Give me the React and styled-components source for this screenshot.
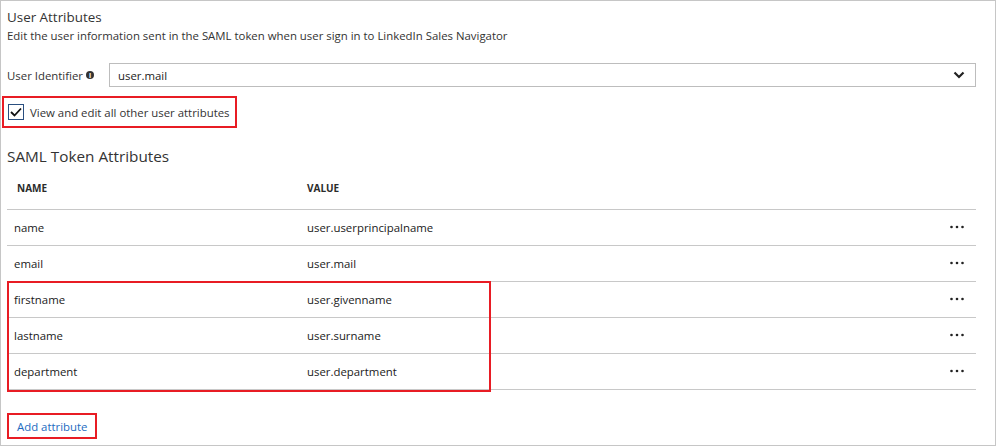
import React from 'react';
import styled, { createGlobalStyle } from 'styled-components';

const GlobalStyle = createGlobalStyle`
   html, body {
      margin: 0;
      padding: 0;
      background: #fff;
   }
   body {
      font-family: "Open Sans", "Noto Sans", sans-serif;
      color: #252525;
   }
`

const attributes = [
   { name: 'name', value: 'user.userprincipalname' },
   { name: 'email', value: 'user.mail' },
]

const extraAttributes = [
   { name: 'firstname', value: 'user.givenname' },
   { name: 'lastname', value: 'user.surname' },
   { name: 'department', value: 'user.department' },
]

const MoreIcon = () => (
   <svg width="14" height="4" viewBox="0 0 14 4">
      <circle cx="1.5" cy="2" r="1.3" fill="#222" />
      <circle cx="7" cy="2" r="1.3" fill="#222" />
      <circle cx="12.5" cy="2" r="1.3" fill="#222" />
   </svg>
)

const Row = ({ item }) => (
   <TableRow>
      <Cell>{item.name}</Cell>
      <Cell>{item.value}</Cell>
      <Actions><MoreIcon /></Actions>
   </TableRow>
)

const App = () => {
   return (
      <>
         <GlobalStyle />
         <Panel>
            <Title>User Attributes</Title>
            <Subtitle>Edit the user information sent in the SAML token when user sign in to LinkedIn Sales Navigator</Subtitle>

            <Field>
               <Label>
                  User Identifier
                  <Info>i</Info>
               </Label>
               <Select>
                  <span>user.mail</span>
                  <svg width="12" height="8" viewBox="0 0 12 8">
                     <polyline points="1.5,1.5 6,6 10.5,1.5" fill="none" stroke="#222" strokeWidth="2.2" />
                  </svg>
               </Select>
            </Field>

            <Highlight>
               <Checkbox>
                  <svg width="12" height="10" viewBox="0 0 12 10">
                     <polyline points="1,5 4.5,8.5 11,1.5" fill="none" stroke="#111" strokeWidth="1.8" />
                  </svg>
               </Checkbox>
               View and edit all other user attributes
            </Highlight>

            <Heading>SAML Token Attributes</Heading>

            <Table>
               <HeaderRow>
                  <HeadCell>Name</HeadCell>
                  <HeadCell>Value</HeadCell>
                  <span />
               </HeaderRow>
               {attributes.map((item) => (
                  <Row key={item.name} item={item} />
               ))}
               <Group>
                  {extraAttributes.map((item) => (
                     <Row key={item.name} item={item} />
                  ))}
               </Group>
            </Table>

            <AddLink href="#" onClick={(e) => e.preventDefault()}>Add attribute</AddLink>
         </Panel>
      </>
   )
}

const Panel = styled.div`
   box-sizing: border-box;
   width: 996px;
   height: 446px;
   border: 1px solid #c6c6c6;
   padding: 6px 19px 0 6px;
   overflow: hidden;
`

const Title = styled.h2`
   margin: 0;
   font-size: 13.4px;
   font-weight: 400;
   line-height: 20px;
   color: #333;
`

const Subtitle = styled.p`
   margin: 0;
   font-size: 11.4px;
   line-height: 18px;
   color: #333;
`

const Field = styled.div`
   display: grid;
   grid-template-columns: 102px 1fr;
   align-items: center;
   margin-top: 18px;
`

const Label = styled.label`
   display: flex;
   align-items: center;
   gap: 3px;
   font-size: 11.4px;
   color: #333;
`

const Info = styled.span`
   display: inline-flex;
   align-items: center;
   justify-content: center;
   width: 8px;
   height: 8px;
   border-radius: 50%;
   background: #333;
   color: #fff;
   font-size: 7px;
   font-weight: 700;
   line-height: 1;
`

const Select = styled.div`
   box-sizing: border-box;
   display: flex;
   align-items: center;
   justify-content: space-between;
   height: 24px;
   border: 1px solid #bdbdbd;
   padding: 0 10px 0 8px;
   font-size: 11.4px;
   color: #222;
`

const Highlight = styled.div`
   display: inline-flex;
   align-items: center;
   gap: 6px;
   box-sizing: border-box;
   height: 32px;
   margin: 9px 0 0 -5px;
   padding: 0 5px 0 4px;
   border: 2px solid #e81c24;
   font-size: 11.4px;
   color: #333;
`

const Checkbox = styled.span`
   box-sizing: border-box;
   display: inline-flex;
   align-items: center;
   justify-content: center;
   width: 16px;
   height: 16px;
   border: 1px solid #2a4f80;
`

const Heading = styled.h3`
   margin: 17px 0 0;
   font-size: 15.3px;
   font-weight: 400;
   line-height: 22px;
   color: #333;
`

const Table = styled.div`
   margin-top: 1px;
`

const columns = `
   display: grid;
   grid-template-columns: 300px 1fr 40px;
   align-items: center;
   border-bottom: 1px solid #c8c8c8;
`

const HeaderRow = styled.div`
   ${columns}
   height: 42px;
   padding-bottom: 2px;
   box-sizing: border-box;
`

const HeadCell = styled.span`
   font-size: 10px;
   font-weight: 700;
   text-transform: uppercase;
   color: #2b2b2b;
   padding-left: 10px;
   & + & {
      padding-left: 0;
   }
`

const TableRow = styled.div`
   ${columns}
   height: 36px;
   box-sizing: border-box;
   padding-bottom: 1px;
`

const Cell = styled.span`
   font-size: 11.4px;
   color: #1a1a1a;
   padding-left: 7px;
   & + & {
      padding-left: 0;
   }
`

const Actions = styled.span`
   display: flex;
   justify-content: flex-start;
   padding-left: 14px;
`

const Group = styled.div`
   position: relative;
   &::after {
      content: '';
      position: absolute;
      left: 0;
      top: -1px;
      width: 484px;
      height: 111px;
      border: 2px solid #e81c24;
      box-sizing: border-box;
      pointer-events: none;
   }
`

const AddLink = styled.a`
   display: inline-flex;
   align-items: center;
   box-sizing: border-box;
   height: 26px;
   margin-top: 23px;
   padding: 0 7px 0 8px;
   border: 2px solid #e81c24;
   font-size: 11.4px;
   color: #1d6bbf;
   text-decoration: none;
`

export default App
